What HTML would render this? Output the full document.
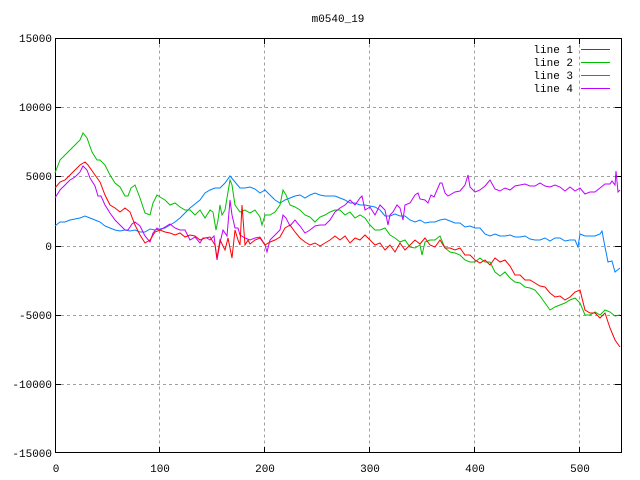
<!DOCTYPE html>
<html><head><style>html,body{margin:0;padding:0;background:#fff;}svg{display:block}text{font-family:"Liberation Mono",monospace;font-size:11px;fill:#000}</style></head>
<body>
<svg width="640" height="480" viewBox="0 0 640 480" xmlns="http://www.w3.org/2000/svg">
<rect width="640" height="480" fill="#fff"/>
<g stroke="#a0a0a0" stroke-dasharray="3,3" stroke-width="1" fill="none" shape-rendering="crispEdges">
<path d="M159.5,38.5V452.5M264.5,38.5V452.5M369.5,38.5V452.5M474.5,38.5V452.5M579.5,38.5V452.5"/>
<path d="M55,107.5H621M55,176.5H621M55,246.5H621M55,315.5H621M55,384.5H621"/>
</g>
<g stroke="#000" fill="none" shape-rendering="crispEdges">
<rect x="55.5" y="38.5" width="566" height="414"/>
<path d="M55,107.5h6M55,176.5h6M55,246.5h6M55,315.5h6M55,384.5h6M621,107.5h-6M621,176.5h-6M621,246.5h-6M621,315.5h-6M621,384.5h-6"/>
<path d="M159.5,453v-6M264.5,453v-6M369.5,453v-6M474.5,453v-6M579.5,453v-6M159.5,38v6M264.5,38v6M369.5,38v6M474.5,38v6M579.5,38v6"/>
</g>
<g text-anchor="end">
<text x="52" y="42">15000</text><text x="52" y="111">10000</text><text x="52" y="180">5000</text><text x="52" y="250">0</text><text x="52" y="319">-5000</text><text x="52" y="388">-10000</text><text x="52" y="457">-15000</text>
</g>
<g text-anchor="middle">
<text x="56" y="472">0</text><text x="160" y="472">100</text><text x="265" y="472">200</text><text x="370" y="472">300</text><text x="475" y="472">400</text><text x="580" y="472">500</text>
<text x="338" y="22">m0540_19</text>
</g>
<g text-anchor="end">
<text x="573" y="53">line 1</text><text x="573" y="66">line 2</text><text x="573" y="79">line 3</text><text x="573" y="92">line 4</text>
</g>
<rect x="581" y="49" width="29" height="1" fill="#ff0000"/>
<rect x="581" y="62" width="29" height="1" fill="#00c000"/>
<rect x="581" y="75" width="29" height="1" fill="#0080ff"/>
<rect x="581" y="88" width="29" height="1" fill="#c000ff"/>
<g fill="none" stroke-width="1">
<polyline stroke="#0080ff" points="55,226 60,222 65,222 70,220 75,219 80,218 85,216 90,218 95,220 100,222 105,226 110,228 115,230 120,231 125,230 130,231 135,230 140,232 145,232 150,229 155,230 160,229 165,228 170,225 175,222 180,218 185,213 190,208 195,204 200,200 205,193 210,190 215,188 220,188 225,183 230,176 235,182 240,188 245,188 250,187 255,189 260,193 265,190 270,195 275,200 280,203 285,200 290,198 295,196 300,195 305,198 310,195 315,193 320,195 325,196 330,196 335,196 340,198 345,200 350,203 355,203 360,205 365,205 370,206 375,207 380,210 385,216 390,216 395,214 400,216 405,216 410,220 415,222 420,220 425,223 430,222 435,222 440,220 445,219 450,221 455,223 460,223 465,227 470,226 475,228 480,228 485,234 490,236 495,234 500,236 505,236 510,235 515,237 520,237 525,236 530,239 535,240 540,240 545,238 550,241 555,238 560,238 565,241 570,240 575,240 578,247 580,234 585,236 590,236 595,236 600,234 602,231 605,247 608,262 612,261 615,272 620,268"/>
<polyline stroke="#00c000" points="55,173 60,160 65,155 70,150 75,145 80,140 83,133 87,138 92,152 97,160 100,160 105,165 110,175 115,183 120,187 125,196 128,196 131,188 135,185 140,198 145,213 150,215 153,203 157,195 160,197 165,200 170,205 175,203 180,207 185,210 190,210 195,215 200,210 205,218 210,210 213,212 216,230 218,220 220,205 222,215 225,210 230,180 232,185 235,205 240,212 245,210 250,213 255,210 260,217 262,225 265,215 270,215 275,212 280,205 283,190 286,195 290,205 295,207 300,210 305,215 310,217 315,222 320,217 325,215 330,212 335,210 340,210 345,215 350,212 355,218 360,215 365,218 370,225 375,230 380,230 385,228 390,235 395,238 400,242 405,240 410,247 415,248 420,245 422,255 425,242 430,240 435,240 440,236 445,248 450,252 455,253 460,255 465,260 470,262 475,262 480,258 485,262 490,262 495,272 500,276 505,272 510,278 515,282 520,283 525,287 530,288 535,290 540,296 545,303 550,310 555,307 560,305 565,303 570,300 575,298 580,303 585,315 590,315 595,312 600,315 605,310 610,312 615,316 620,315"/>
<polyline stroke="#c000ff" points="55,198 60,190 65,185 70,180 75,177 80,172 83,166 87,170 90,178 95,186 98,196 101,196 105,205 110,213 115,220 120,225 125,230 128,230 132,224 135,222 140,226 145,236 150,242 153,233 157,228 160,230 165,227 170,224 175,228 180,230 185,230 190,240 195,237 200,243 203,238 207,238 210,240 214,236 217,260 220,243 223,230 227,236 230,200 232,215 235,228 238,228 240,235 245,238 250,240 255,238 260,237 265,245 267,252 270,240 275,235 280,230 283,215 286,218 290,226 295,220 300,226 305,233 310,230 315,226 320,225 325,225 330,220 335,212 340,208 345,205 350,200 355,205 360,198 362,196 365,210 370,207 375,215 380,205 385,210 388,225 390,215 393,212 397,205 400,208 403,220 405,205 410,203 415,195 418,193 420,199 425,200 428,203 431,195 434,197 437,190 440,183 442,183 445,193 448,196 455,192 460,191 465,185 468,175 470,187 475,192 480,190 485,186 490,180 495,189 500,191 505,188 510,190 515,186 520,185 525,184 530,186 535,186 540,183 545,186 550,187 555,185 560,187 565,191 570,187 575,191 580,188 585,194 590,192 595,192 600,188 605,184 610,184 612,181 615,185 616,171 618,192 620,190"/>
<polyline stroke="#ff0000" points="55,188 60,182 65,180 70,175 75,170 80,165 85,162 88,165 95,175 100,182 105,195 110,205 115,208 120,212 125,208 130,212 135,225 140,235 145,243 150,240 155,232 160,230 165,232 170,233 175,235 180,233 185,237 190,235 195,236 200,240 205,238 210,237 215,245 217,258 220,240 225,250 228,238 232,258 235,230 238,240 240,245 242,205 245,245 248,240 250,244 255,240 260,238 265,245 270,242 275,240 280,237 285,228 290,225 295,232 300,238 305,242 310,245 315,243 320,246 325,243 330,240 335,236 340,240 345,236 350,243 355,238 360,240 365,235 370,240 375,245 380,243 385,250 390,245 395,252 400,243 405,250 410,245 415,240 420,244 425,238 430,245 435,247 440,240 445,248 450,248 455,250 460,248 465,255 470,255 475,260 480,263 485,260 490,265 495,258 500,262 505,260 510,266 515,275 520,275 525,280 530,280 535,283 540,286 545,287 550,293 555,297 560,296 565,300 570,297 575,292 580,290 585,310 590,313 595,313 600,318 605,313 610,328 615,340 620,347"/>
</g>
</svg>
</body></html>
